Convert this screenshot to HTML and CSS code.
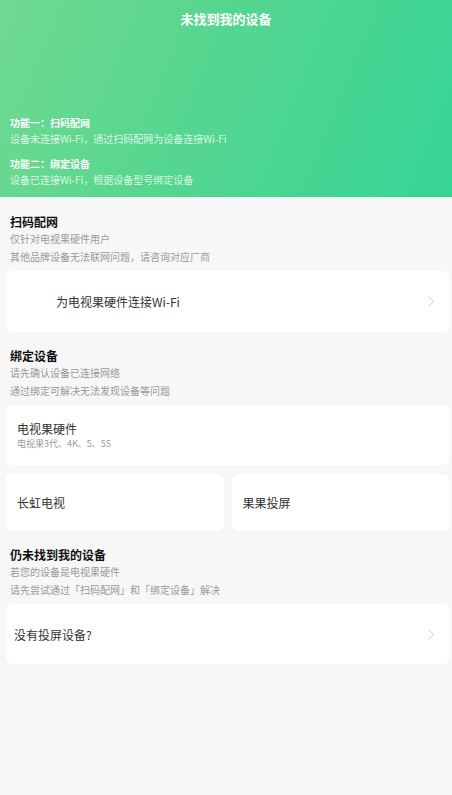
FILE: index.html
```html
<!DOCTYPE html>
<html lang="zh-CN">
<head>
<meta charset="utf-8">
<title>未找到我的设备</title>
<link rel="stylesheet" href="styles.css">
</head>
<body>
<header class="hero">
  <h1 class="hero-title">未找到我的设备</h1>
  <div class="hero-info">
    <div class="feature">
      <div class="feature-name">功能一：扫码配网</div>
      <div class="feature-desc">设备未连接Wi-Fi，通过扫码配网为设备连接Wi-Fi</div>
    </div>
    <div class="feature">
      <div class="feature-name">功能二：绑定设备</div>
      <div class="feature-desc">设备已连接Wi-Fi，根据设备型号绑定设备</div>
    </div>
  </div>
</header>

<main class="content">
  <section class="section">
    <h2 class="sec-title">扫码配网</h2>
    <p class="sec-sub">仅针对电视果硬件用户</p>
    <p class="sec-sub">其他品牌设备无法联网问题，请咨询对应厂商</p>
    <div class="card card-link card-wifi">
      <span class="card-text">为电视果硬件连接Wi-Fi</span>
      <svg class="chev" width="8" height="13" viewBox="0 0 8 13"><path d="M1.5 1.5 L6.5 6.5 L1.5 11.5" fill="none" stroke="#c9c9c9" stroke-width="1"/></svg>
    </div>
  </section>

  <section class="section">
    <h2 class="sec-title">绑定设备</h2>
    <p class="sec-sub">请先确认设备已连接网络</p>
    <p class="sec-sub">通过绑定可解决无法发现设备等问题</p>
    <div class="card card-device">
      <span class="card-text">电视果硬件</span>
      <span class="card-note">电视果3代、4K、5、5S</span>
    </div>
    <div class="card-row">
      <div class="card card-half"><span class="card-text">长虹电视</span></div>
      <div class="card card-half"><span class="card-text">果果投屏</span></div>
    </div>
  </section>

  <section class="section">
    <h2 class="sec-title">仍未找到我的设备</h2>
    <p class="sec-sub">若您的设备是电视果硬件</p>
    <p class="sec-sub">请先尝试通过「扫码配网」和「绑定设备」解决</p>
    <div class="card card-link card-none">
      <span class="card-text">没有投屏设备?</span>
      <svg class="chev" width="8" height="13" viewBox="0 0 8 13"><path d="M1.5 1.5 L6.5 6.5 L1.5 11.5" fill="none" stroke="#c9c9c9" stroke-width="1"/></svg>
    </div>
  </section>
</main>
</body>
</html>
```

FILE: styles.css
```css
* { box-sizing: border-box; margin: 0; padding: 0; }

html, body {
  width: 452px;
  min-height: 795px;
  background: #f7f7f7;
}

body {
  font-family: "Noto Sans CJK SC", "Noto Sans", sans-serif;
  color: #111;
}

.hero {
  height: 198px;
  background: linear-gradient(112deg, #70d990 0%, #55d690 45%, #35d496 100%);
  display: flex;
  flex-direction: column;
  justify-content: space-between;
  padding: 10px 10px 9px 10px;
  border-bottom: 1px solid #e8f7ef;
}

.hero-title {
  text-align: center;
  font-size: 13px;
  line-height: 18px;
  font-weight: 700;
  color: #fff;
}

.hero-info {
  display: flex;
  flex-direction: column;
  gap: 9px;
}

.feature-name {
  font-size: 10px;
  line-height: 16px;
  font-weight: 700;
  color: #fff;
}

.feature-desc {
  font-size: 10px;
  line-height: 16px;
  color: rgba(255, 255, 255, 0.78);
}

.content {
  display: flex;
  flex-direction: column;
}

.section {
  padding-top: 16px;
}

.sec-title {
  font-size: 12px;
  line-height: 16px;
  font-weight: 700;
  color: #111;
  padding-left: 10px;
}

.sec-sub {
  font-size: 10px;
  line-height: 18px;
  color: #999;
  padding-left: 10px;
}

.card {
  background: #fff;
  border-radius: 6px;
  margin: 5px 3px 0 6px;
  display: flex;
}

.card-text {
  font-size: 12px;
  color: #333;
}

.card-link {
  height: 60px;
  align-items: center;
  justify-content: space-between;
  padding-right: 14px;
}

.card-wifi { padding-left: 50px; height: 61px; }
.card-none { padding-left: 8px; }

.chev { display: block; }

.card-device {
  height: 60px;
  flex-direction: column;
  justify-content: center;
  padding-left: 11px;
}

.card-device .card-text {
  line-height: 16px;
}

.card-note {
  font-size: 9px;
  line-height: 13px;
  color: #999;
}

.card-row {
  display: flex;
  gap: 8px;
  margin: 9px 3px 0 6px;
}

.card-half {
  flex: 1;
  margin: 0;
  height: 57px;
  align-items: center;
  padding-left: 11px;
}
```
